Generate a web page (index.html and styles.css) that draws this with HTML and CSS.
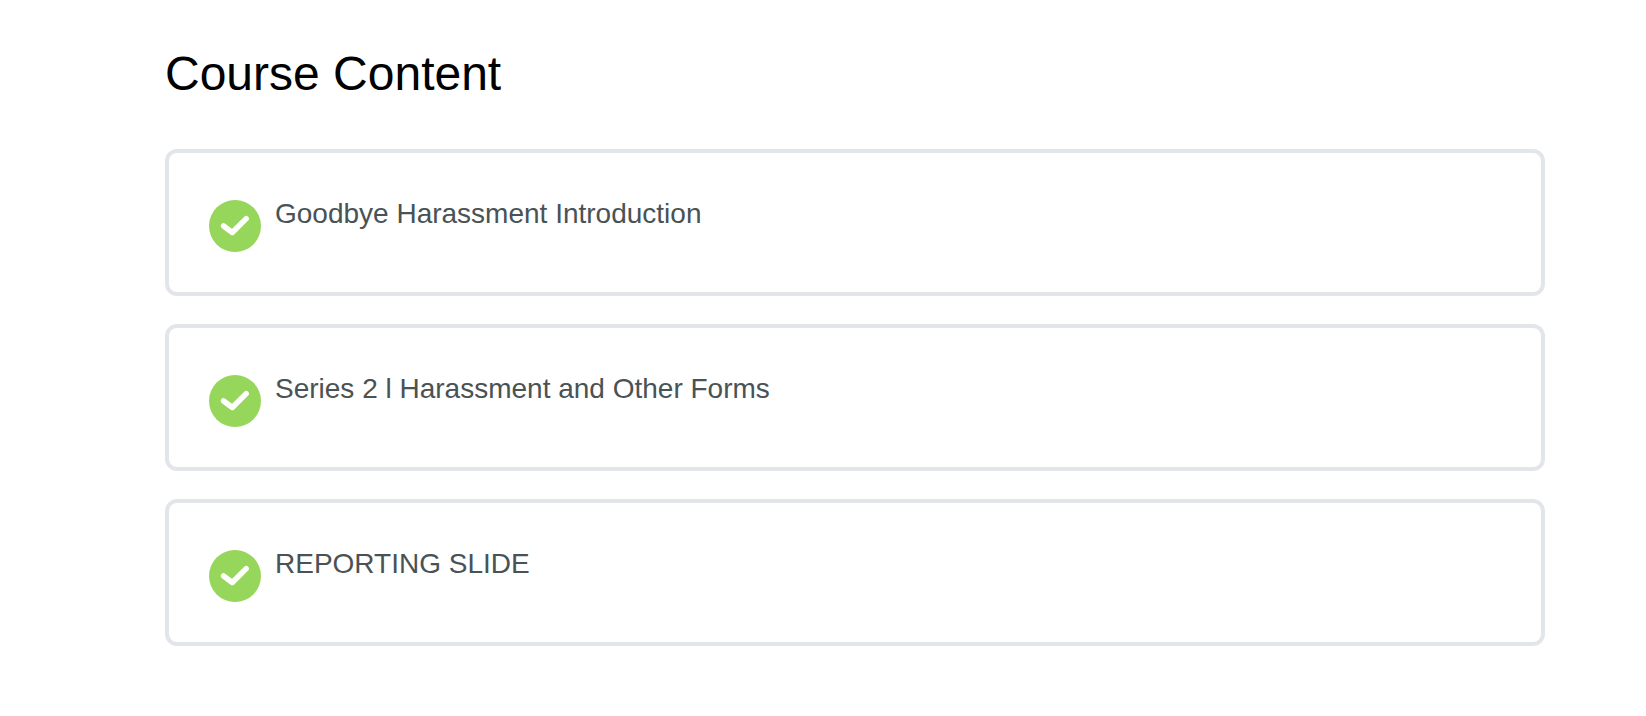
FILE: index.html
```html
<!DOCTYPE html>
<html lang="en">
<head>
<meta charset="utf-8">
<meta name="viewport" content="width=device-width, initial-scale=1">
<title>Course Content</title>
<link rel="stylesheet" href="styles.css">
</head>
<body>
<main class="course">
  <h2 class="course-heading">Course Content</h2>
  <ul class="lesson-list">
    <li class="lesson">
      <a class="lesson-link" href="#introduction">
        <svg class="lesson-status" viewBox="0 0 52 52" aria-hidden="true"><circle cx="26" cy="26" r="26"/><path d="M14.6 26 L23.3 32.5 L37.2 18.6"/></svg>
        <span class="lesson-title">Goodbye Harassment Introduction</span>
      </a>
    </li>
    <li class="lesson">
      <a class="lesson-link" href="#series-2">
        <svg class="lesson-status" viewBox="0 0 52 52" aria-hidden="true"><circle cx="26" cy="26" r="26"/><path d="M14.6 26 L23.3 32.5 L37.2 18.6"/></svg>
        <span class="lesson-title">Series 2 l Harassment and Other Forms</span>
      </a>
    </li>
    <li class="lesson">
      <a class="lesson-link" href="#reporting">
        <svg class="lesson-status" viewBox="0 0 52 52" aria-hidden="true"><circle cx="26" cy="26" r="26"/><path d="M14.6 26 L23.3 32.5 L37.2 18.6"/></svg>
        <span class="lesson-title">REPORTING SLIDE</span>
      </a>
    </li>
  </ul>
</main>
</body>
</html>
```
FILE: styles.css
```css
body {
  margin: 0;
  background: #fff;
  color: #000;
  font-family: "Liberation Sans", Arial, sans-serif;
}

.course {
  padding: 44px 101px 44px 165px;
}

.course-heading {
  margin: 0 0 45px;
  font-size: 48px;
  font-weight: 300;
  line-height: 60px;
}

.lesson-list {
  display: grid;
  gap: 28px;
  margin: 0;
  padding: 0;
  list-style: none;
}

.lesson {
  border: 4px solid #e2e6eb;
  border-radius: 12px;
}

.lesson-link {
  display: flex;
  gap: 14px;
  padding: 40px;
  color: #495255;
  text-decoration: none;
}

.lesson-status {
  flex: none;
  width: 52px;
  height: 52px;
  margin-top: 7px;
}

.lesson-status circle {
  fill: #96d65b;
}

.lesson-status path {
  fill: none;
  stroke: #fff;
  stroke-width: 5.5;
  stroke-linecap: round;
  stroke-linejoin: round;
}

.lesson-title {
  font-size: 28px;
  line-height: 42px;
}
```
